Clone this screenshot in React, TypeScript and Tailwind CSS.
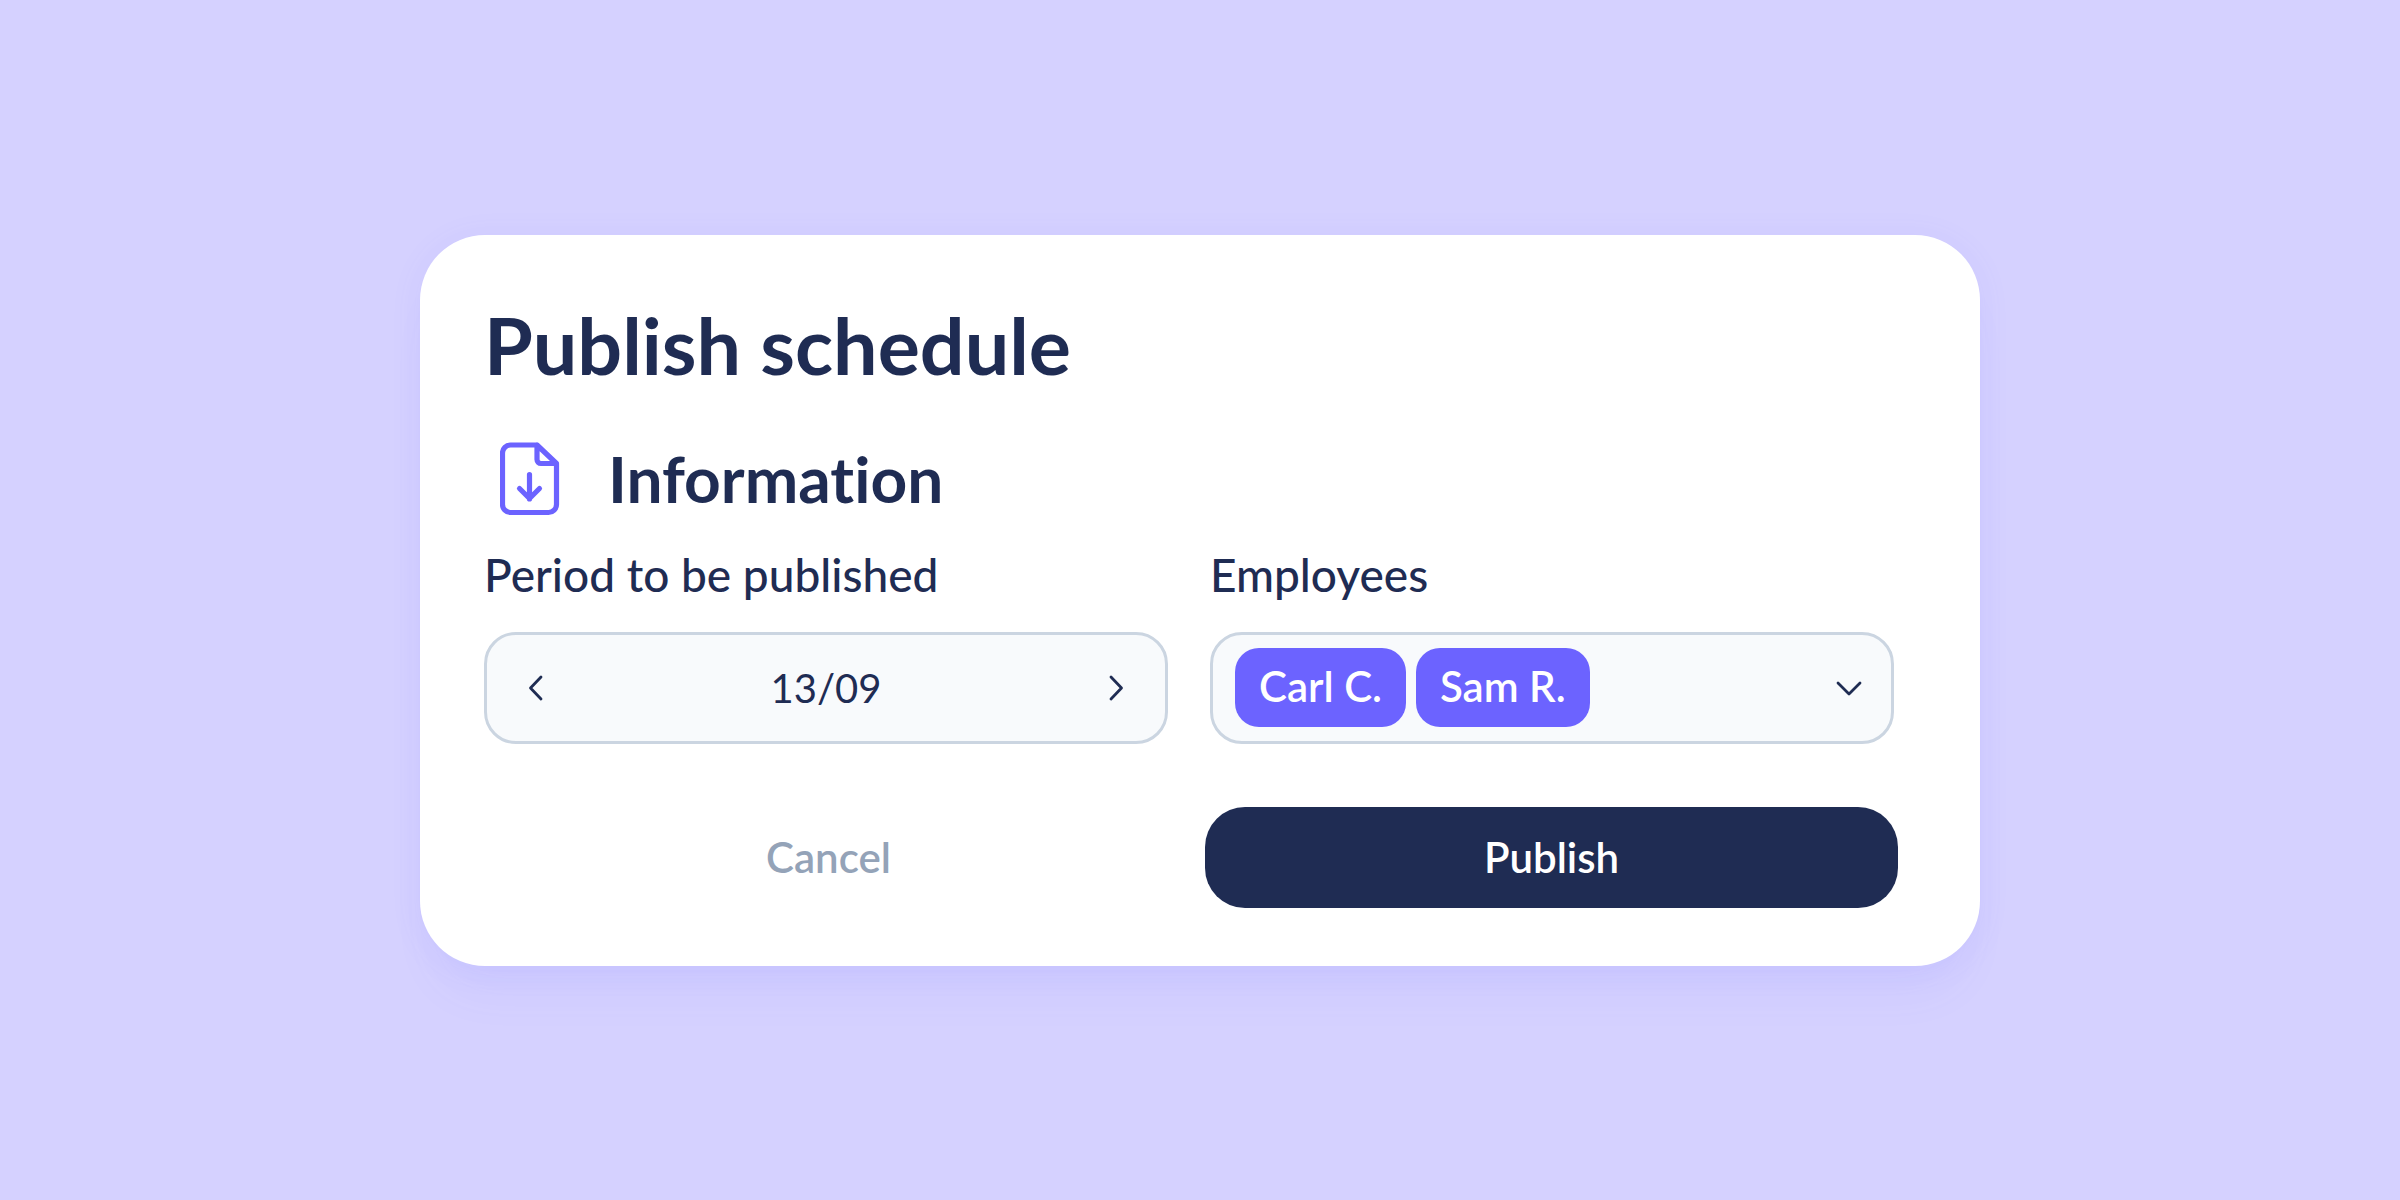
import { useState } from "react";

const employees = ["Carl C.", "Sam R."];

function Chevron({ d }: { d: string }) {
  return (
    <svg
      className="size-8 shrink-0"
      viewBox="0 0 32 32"
      fill="none"
      stroke="currentColor"
      strokeWidth="2.8"
      strokeLinecap="round"
      strokeLinejoin="round"
      aria-hidden="true"
    >
      <path d={d} />
    </svg>
  );
}

function FileDownIcon() {
  return (
    <svg
      className="h-[74px] w-[60px] shrink-0"
      viewBox="0 0 60 74"
      fill="none"
      stroke="currentColor"
      strokeWidth="5.200"
      strokeLinecap="round"
      strokeLinejoin="round"
      aria-hidden="true"
    >
      <path d="M37 3H10.500a8 8 0 0 0-8 8v51.500a8 8 0 0 0 8 8h38a8 8 0 0 0 8-8V21.500L37 3v14.500a4 4 0 0 0 4 4h15.500" />
      <path d="M29.500 32.500V57M19.500 46.500L29.500 56.500L39.500 46.500" />
    </svg>
  );
}

export default function App() {
  const [period, setPeriod] = useState("13/09");

  return (
    <main className="flex min-h-screen items-center justify-center bg-[#d5d1ff] font-['Lato',sans-serif] text-[#1f2c53] [font-variant-ligatures:none]">
      <form
        className="flex w-[65%] flex-col rounded-[65px] bg-white pt-[62px] pr-[86px] pb-[58px] pl-16 shadow-[0_4px_32px_rgba(108,99,255,0.08),0_40px_50px_-20px_rgba(108,99,255,0.08)]"
        onSubmit={(e) => e.preventDefault()}
      >
        <h1 className="text-[79px] leading-[96px] font-bold">Publish schedule</h1>

        <div className="mt-[46px] flex items-center gap-12 pl-4">
          <span className="text-[#6c63ff]">
            <FileDownIcon />
          </span>
          <h2 className="text-[64px] leading-[80px] font-bold">Information</h2>
        </div>

        <div className="mt-[26px] grid grid-cols-2 gap-[42px]">
          <div className="flex flex-col gap-[27px]">
            <label htmlFor="period" className="text-[46px] leading-[60px] font-medium">
              Period to be published
            </label>
            <div className="flex h-28 items-center justify-between rounded-[32px] border-[3px] border-[#cbd5e1] bg-[#f8fafc] px-[34px]">
              <button type="button" aria-label="Previous period">
                <Chevron d="M20 5L9.500 16L20 27" />
              </button>
              <input
                id="period"
                type="text"
                value={period}
                onChange={(e) => setPeriod(e.target.value)}
                className="min-w-0 flex-1 bg-transparent text-center text-[40px] outline-none"
              />
              <button type="button" aria-label="Next period">
                <Chevron d="M12 5L22.500 16L12 27" />
              </button>
            </div>
          </div>

          <div className="flex flex-col gap-[27px]">
            <label htmlFor="employees" className="text-[46px] leading-[60px] font-medium">
              Employees
            </label>
            <button
              id="employees"
              type="button"
              aria-haspopup="listbox"
              className="flex h-28 items-center justify-between rounded-[32px] border-[3px] border-[#cbd5e1] bg-[#f8fafc] pr-[26px] pl-[22px]"
            >
              <span className="flex gap-[10px]">
                {employees.map((name) => (
                  <span
                    key={name}
                    className="rounded-3xl bg-[#6c63ff] px-6 pt-[15px] pb-[17px] text-[42px] leading-[47px] font-semibold text-white"
                  >
                    {name}
                  </span>
                ))}
              </span>
              <Chevron d="M5 11L16 22L27 11" />
            </button>
          </div>
        </div>

        <div className="-mr-1 mt-[63px] grid grid-cols-2 gap-7">
          <button type="button" className="h-[101px] rounded-[40px] pr-1 text-[42px] font-semibold text-[#94a3b8]">
            Cancel
          </button>
          <button type="submit" className="h-[101px] rounded-[40px] bg-[#1f2c53] text-[42px] font-semibold text-white">
            Publish
          </button>
        </div>
      </form>
    </main>
  );
}
